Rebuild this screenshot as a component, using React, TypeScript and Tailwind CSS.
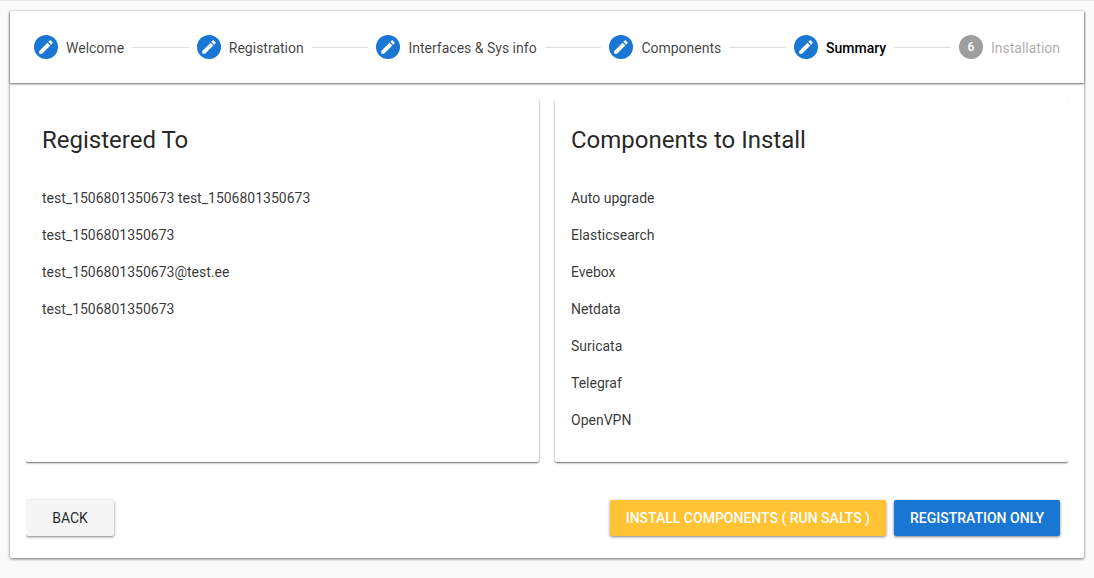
import { Fragment } from "react";

type StepState = "done" | "current" | "pending";

const steps: { label: string; state: StepState }[] = [
  { label: "Welcome", state: "done" },
  { label: "Registration", state: "done" },
  { label: "Interfaces & Sys info", state: "done" },
  { label: "Components", state: "done" },
  { label: "Summary", state: "current" },
  { label: "Installation", state: "pending" },
];

const labelStyles: Record<StepState, string> = {
  done: "text-black/75",
  current: "font-medium text-black",
  pending: "text-black/35",
};

const registration = [
  "test_1506801350673 test_1506801350673",
  "test_1506801350673",
  "test_1506801350673@test.ee",
  "test_1506801350673",
];

const components = [
  "Auto upgrade",
  "Elasticsearch",
  "Evebox",
  "Netdata",
  "Suricata",
  "Telegraf",
  "OpenVPN",
];

function PencilIcon() {
  return (
    <svg viewBox="0 0 24 24" className="size-[18px] fill-current" aria-hidden="true">
      <path d="M3 17.25V21h3.75L17.81 9.94l-3.75-3.75L3 17.25zM20.71 7.04a1 1 0 0 0 0-1.41l-2.34-2.34a1 1 0 0 0-1.41 0l-1.83 1.83 3.75 3.75 1.83-1.83z" />
    </svg>
  );
}

function Stepper() {
  return (
    <nav
      aria-label="Setup progress"
      className="flex h-18 items-center gap-2 px-6 shadow-[0_1px_2px_rgba(0,0,0,0.6)]"
    >
      {steps.map(({ label, state }, index) => (
        <Fragment key={label}>
          {index > 0 && <span className="h-px flex-1 bg-black/12" />}
          <button
            type="button"
            disabled={state === "pending"}
            aria-current={state === "current" ? "step" : undefined}
            className="flex items-center gap-2 whitespace-nowrap"
          >
            <span
              className={`flex size-6 items-center justify-center rounded-full text-xs font-medium text-white ${
                state === "pending" ? "bg-[#9e9e9e]" : "bg-[#1976d2]"
              }`}
            >
              {state === "pending" ? index + 1 : <PencilIcon />}
            </span>
            <span className={`pt-0.5 ${labelStyles[state]}`}>{label}</span>
          </button>
        </Fragment>
      ))}
    </nav>
  );
}

function SummaryCard({ title, items }: { title: string; items: string[] }) {
  return (
    <section className="flex-1 rounded-xs bg-white px-4 pt-[25px] pb-[15px] shadow-[0_1px_2px_rgba(0,0,0,0.6)]">
      <h2 className="mb-8 text-2xl leading-8">{title}</h2>
      <ul className="text-black/80">
        {items.map((item, index) => (
          <li key={index} className="mb-4 leading-[21px]">
            {item}
          </li>
        ))}
      </ul>
    </section>
  );
}

const buttonBase =
  "h-9 rounded-xs px-4 uppercase shadow-[0_1px_3px_rgba(0,0,0,0.5)]";

export default function App() {
  return (
    <div className="min-h-screen border-t border-[#ececec] bg-[#fafafa] px-[10px] pt-[10px] pb-5 font-['Roboto',sans-serif] text-sm text-black/87">
      <main className="rounded-xs bg-white shadow-[0_1px_3px_rgba(0,0,0,0.6)]">
        <Stepper />
        <div className="px-4 pt-4">
          <div className="overflow-hidden pb-[22px]">
            <div className="flex gap-4">
              <SummaryCard title="Registered To" items={registration} />
              <SummaryCard title="Components to Install" items={components} />
            </div>
            <div className="flex items-center gap-2 pt-[38px] pr-2">
              <button type="button" className={`${buttonBase} mr-auto min-w-[88px] bg-[#f5f5f5]`}>
                Back
              </button>
              <button type="button" className={`${buttonBase} bg-[#ffc333] font-medium text-white`}>
                Install components ( run salts )
              </button>
              <button type="button" className={`${buttonBase} bg-[#1976d2] font-medium text-white`}>
                Registration only
              </button>
            </div>
          </div>
        </div>
      </main>
    </div>
  );
}
